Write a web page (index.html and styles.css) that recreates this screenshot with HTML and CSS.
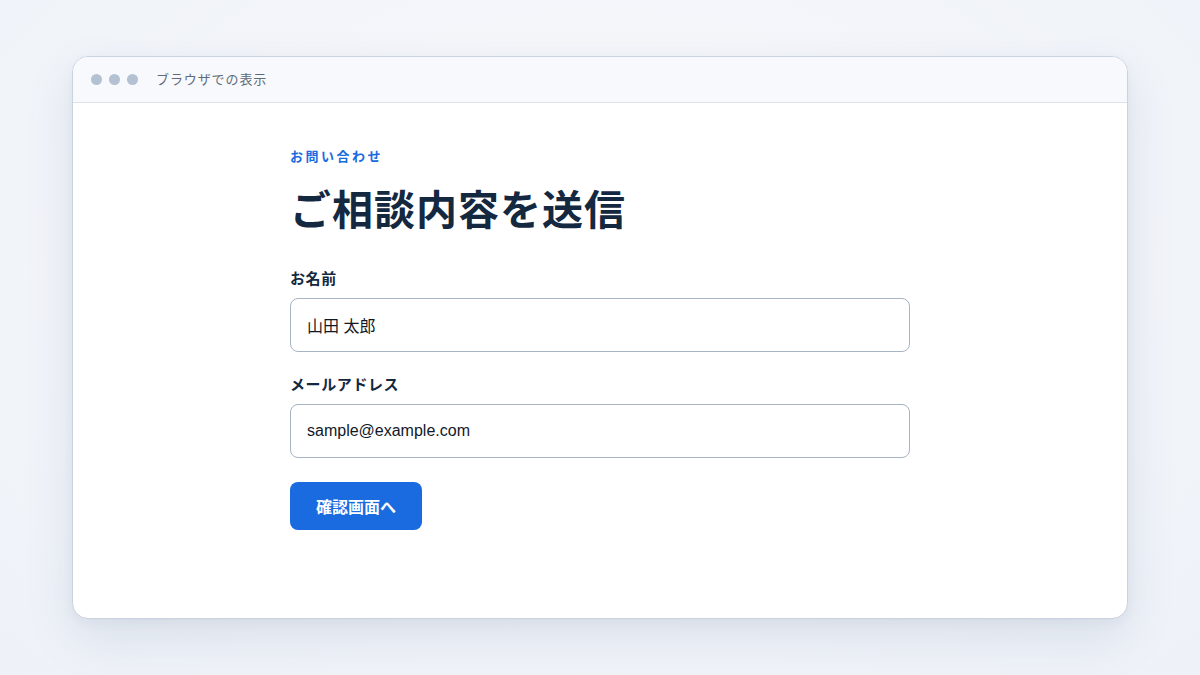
FILE: index.html
```html
<!DOCTYPE html>
<html lang="ja">
<head>
<meta charset="utf-8">
<title>お問い合わせ</title>
<link rel="stylesheet" href="styles.css">
</head>
<body>
<div class="stage">
  <div class="window">
    <div class="titlebar">
      <div class="dots"><span class="dot"></span><span class="dot"></span><span class="dot"></span></div>
      <div class="wtitle">ブラウザでの表示</div>
    </div>
    <div class="content">
      <form class="form">
        <div class="eyebrow">お問い合わせ</div>
        <h1 class="heading">ご相談内容を送信</h1>
        <label class="label label-first">お名前</label>
        <div class="input">山田 太郎</div>
        <label class="label">メールアドレス</label>
        <div class="input">sample@example.com</div>
        <div class="actions"><button type="button" class="btn">確認画面へ</button></div>
      </form>
    </div>
  </div>
</div>
</body>
</html>
```
FILE: styles.css
```css
html, body {
  margin: 0;
  padding: 0;
}
body {
  width: 1200px;
  height: 675px;
  overflow: hidden;
  background: radial-gradient(ellipse at 50% 40%, #f8f9fc 0%, #f1f4f9 70%, #eef2f8 100%);
  font-family: "Noto Sans CJK JP", "Inter", "Liberation Sans", sans-serif;
}
.stage {
  padding: 56px 72px 0 72px;
}
.window {
  height: 563px;
  background: #ffffff;
  border: 1px solid #c9d3df;
  border-radius: 16px;
  box-shadow: 0 20px 50px rgba(30, 60, 110, 0.10), 0 4px 12px rgba(30, 60, 110, 0.05);
  overflow: hidden;
  box-sizing: border-box;
}
.titlebar {
  height: 46px;
  background: #f7f9fc;
  border-bottom: 1px solid #dde3ec;
  display: flex;
  align-items: center;
  padding-left: 18px;
  box-sizing: border-box;
}
.dots {
  display: flex;
  gap: 7px;
}
.dot {
  width: 11px;
  height: 11px;
  border-radius: 50%;
  background: #b3c1d2;
}
.wtitle {
  margin-left: 18px;
  margin-top: -2px;
  font-size: 13px;
  color: #5f6b7a;
  letter-spacing: 0.9px;
}
.content {
  padding-top: 43px;
  display: flex;
  justify-content: center;
}
.form {
  width: 620px;
  display: flex;
  flex-direction: column;
}
.eyebrow {
  font-size: 13px;
  line-height: 20px;
  font-weight: 700;
  color: #1a6be0;
  letter-spacing: 2.5px;
}
.heading {
  margin: 13px 0 0 0;
  font-size: 41px;
  line-height: 56px;
  font-weight: 700;
  color: #14283f;
  letter-spacing: 1px;
}
.label {
  display: block;
  margin-top: 21px;
  font-size: 15px;
  line-height: 22px;
  font-weight: 700;
  color: #14283f;
  letter-spacing: 0.6px;
}
.label-first {
  margin-top: 32px;
}
.input {
  margin-top: 9px;
  height: 54px;
  box-sizing: border-box;
  border: 1px solid #a7b4c3;
  border-radius: 8px;
  padding: 0 16px;
  display: flex;
  align-items: center;
  font-size: 16px;
  color: #111827;
  font-family: "Liberation Sans", "Noto Sans CJK JP", sans-serif;
}
.actions {
  margin-top: 24px;
}
.btn {
  width: 132px;
  height: 48px;
  border: none;
  border-radius: 8px;
  background: #1a6be0;
  color: #ffffff;
  font-size: 16px;
  font-weight: 700;
  font-family: "Noto Sans CJK JP", "Inter", sans-serif;
  padding: 0;
}
```
